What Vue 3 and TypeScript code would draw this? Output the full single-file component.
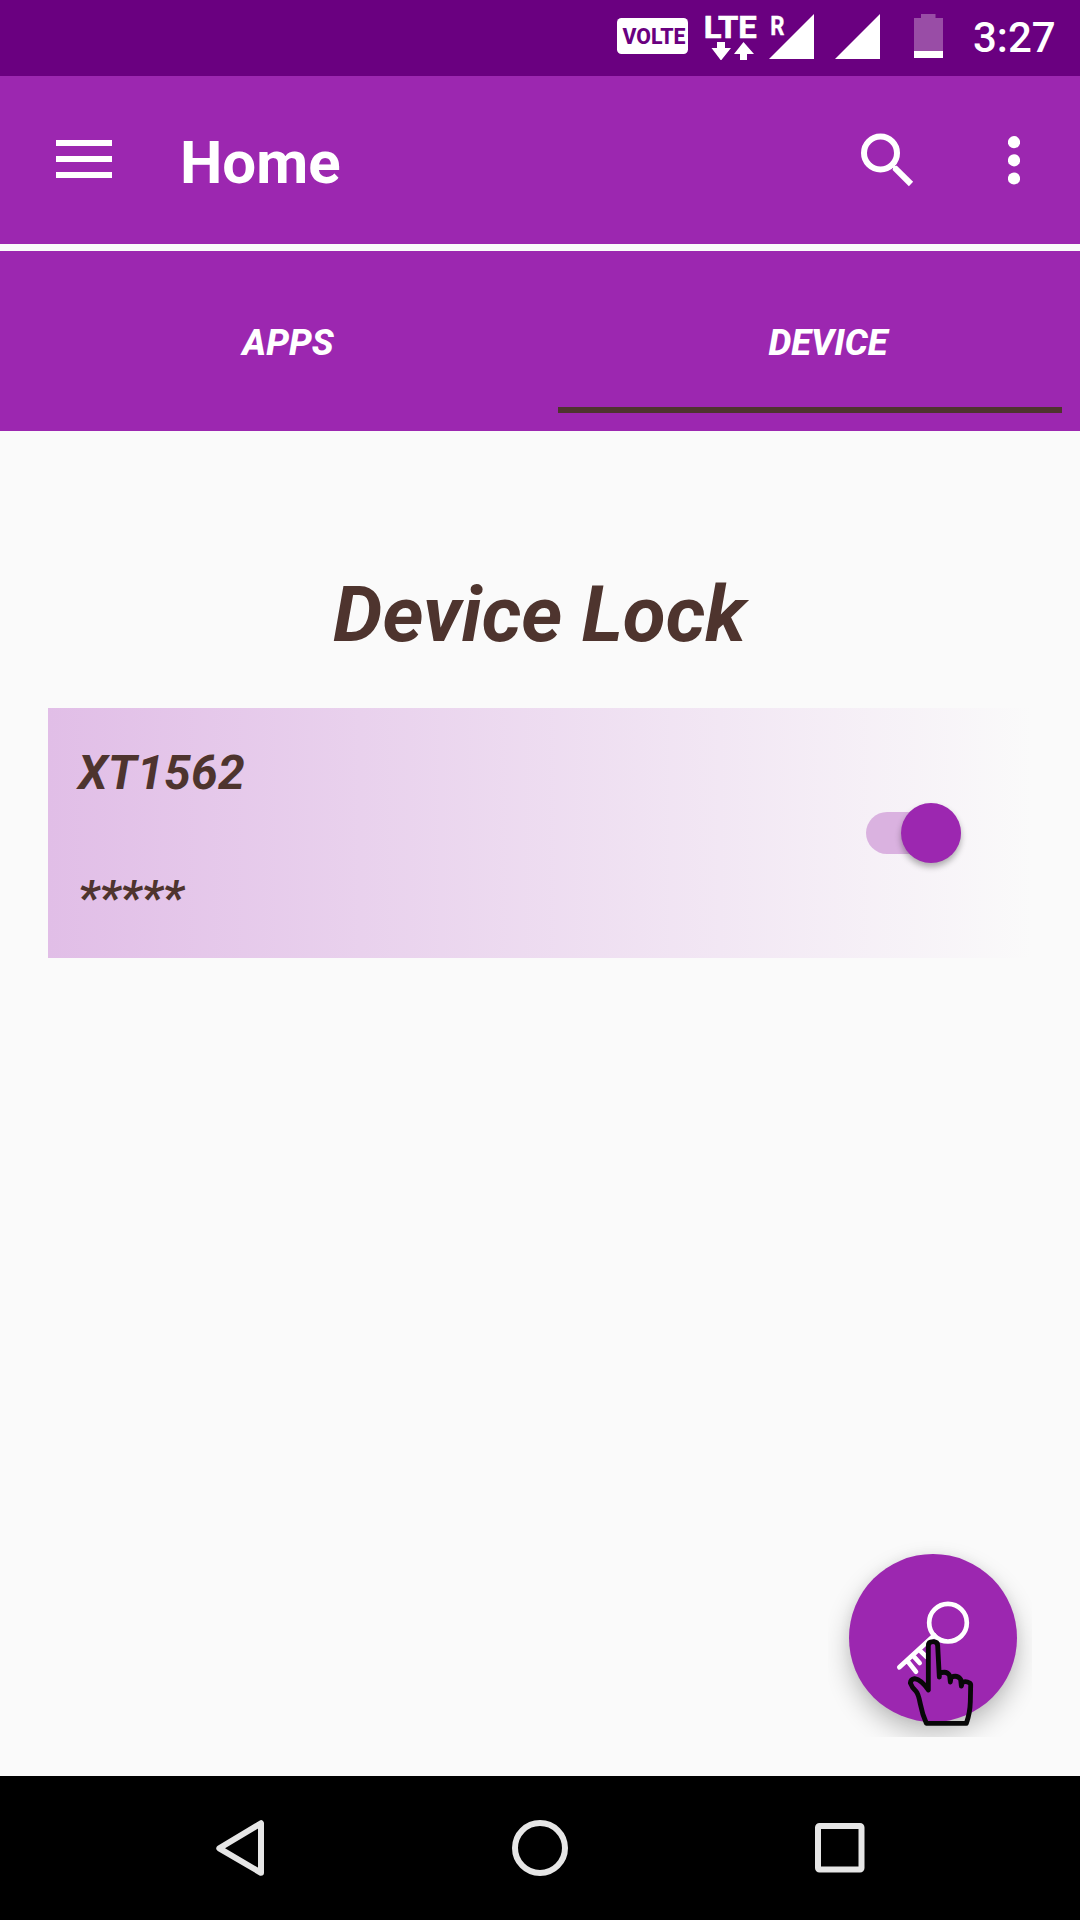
<script setup lang="ts">
import { ref } from 'vue'

interface Tab {
  id: string
  label: string
}

const tabs: Tab[] = [
  { id: 'apps', label: 'APPS' },
  { id: 'device', label: 'DEVICE' },
]
const active = ref('device')
const locked = ref(true)
const device = { name: 'XT1562', pin: '*****' }
</script>

<template>
  <div class="screen">
    <div class="status">
      <svg class="volte" width="71" height="36" viewBox="0 0 71 36">
        <rect width="71" height="36" rx="4.5" fill="#fff" />
        <text x="5.4" y="25.6" font-size="21.5" font-weight="800" fill="#6a0080" textLength="63" lengthAdjust="spacingAndGlyphs">VOLTE</text>
      </svg>
      <svg class="lte" width="53" height="76" viewBox="704 0 53 76" fill="#fff">
        <text x="703.800" y="37.500" font-size="31.500" font-weight="700" stroke="#fff" stroke-width=".6" textLength="52.800" lengthAdjust="spacingAndGlyphs">LTE</text>
        <path d="M717 42h8v6h6l-9.600 12h-.8L711.500 48h5.500zM743.500 42l10.500 12h-7v6h-7v-6h-6z" />
      </svg>
      <svg class="signal" width="46" height="76" viewBox="769 0 46 76" fill="#fff">
        <text x="770.2" y="35.3" font-size="25" font-weight="700" stroke="#fff" stroke-width=".4" textLength="14.200" lengthAdjust="spacingAndGlyphs">R</text>
        <path d="M769 59L814 14v45z" />
      </svg>
      <svg class="signal second" width="46" height="76" viewBox="835 0 46 76" fill="#fff">
        <path d="M835 59L880 14v45z" />
      </svg>
      <svg class="battery" width="29" height="76" viewBox="914 0 29 76">
        <path d="M921 14h14.500v4H943v33h-29V18h7z" fill="#994da6" />
        <path d="M914 51h29v7h-29z" fill="#fff" />
      </svg>
      <span class="clock">3:27</span>
    </div>

    <header class="toolbar">
      <svg class="menu" width="56" height="38" viewBox="0 0 56 38" fill="#fff">
        <path d="M0 0h56v6H0zM0 16h56v6H0zM0 32h56v6H0z" />
      </svg>
      <h1>Home</h1>
      <svg class="search" width="54" height="54" viewBox="0 0 54 54" fill="none" stroke="#fff">
        <circle cx="20.500" cy="20" r="16.500" stroke-width="6" />
        <path d="M34.500 34.700L51 51" stroke-width="6" />
        <path d="M34 36.800v-2.800h3" stroke-width="2" />
      </svg>
      <svg class="more" width="12" height="49" viewBox="0 0 12 49" fill="#fff">
        <circle cx="6" cy="6.200" r="6.100" />
        <circle cx="6" cy="24.300" r="6.100" />
        <circle cx="6" cy="42.500" r="6.100" />
      </svg>
    </header>

    <nav class="tabs">
      <div
        v-for="tab in tabs"
        :key="tab.id"
        class="tab"
        :class="[tab.id, { active: tab.id === active }]"
        @click="active = tab.id"
      >
        <span>{{ tab.label }}</span>
      </div>
    </nav>

    <main class="content">
      <h2>Device Lock</h2>
      <section class="card">
        <div class="info">
          <span class="name">{{ device.name }}</span>
          <span class="pin">{{ device.pin }}</span>
        </div>
        <div class="switch" :class="{ on: locked }" @click="locked = !locked">
          <div class="thumb"></div>
        </div>
      </section>
      <div class="fab-area">
        <div class="fab"></div>
        <svg width="204" height="207" viewBox="24 0 612 621" fill="none" stroke-linecap="round" stroke-linejoin="round">
          <g stroke="#fff" stroke-width="14">
            <circle cx="384" cy="278" r="56.500" />
            <path d="M343 316L238 412M263 394L288 425M281 379L299 399M299 361L320 381" />
          </g>
          <path
            d="M325 480V347Q325 335 339 335T353 347L358 441V430Q381 421 389 437L391 456L393 442Q411 433 422 448L424 468L427 457Q438 452 449 459Q453 462 452 468L451 515Q450 550 439 580H319Q307 553 301 522T288 484Q276 473 271 459Q272 448 284 446Q305 450 325 480"
            stroke="#080808"
            stroke-width="14.500"
          />
        </svg>
      </div>
    </main>

    <footer class="navbar">
      <svg width="48" height="56" viewBox="216 1820 48 56">
        <path d="M219.300 1848.300L261 1823.200V1872.800Z" />
      </svg>
      <svg width="56" height="56" viewBox="0 0 56 56">
        <circle cx="28" cy="28" r="25" />
      </svg>
      <svg width="50" height="50" viewBox="0 0 50 50">
        <rect x="3" y="3" width="43.500" height="43.500" rx="1.500" />
      </svg>
    </footer>
  </div>
</template>

<style>
body {
  margin: 0;
}
</style>

<style scoped>
.screen {
  width: 1080px;
  height: 1920px;
  display: flex;
  flex-direction: column;
  overflow: hidden;
  background: #fafafa;
  font-family: Roboto, 'Liberation Sans', sans-serif;
}
svg {
  display: block;
  flex: none;
}
.status {
  height: 76px;
  flex: none;
  display: flex;
  align-items: center;
  background: #6a0080;
  padding-left: 617px;
}
.volte {
  margin-bottom: 4px;
}
.lte {
  margin-left: 16px;
}
.signal {
  margin-left: 12px;
}
.signal.second {
  margin-left: 20px;
}
.battery {
  margin-left: 33px;
}
.clock {
  margin-left: 30px;
  font-size: 42px;
  font-weight: 500;
  line-height: 76px;
  color: #fff;
}
.toolbar {
  height: 168px;
  flex: none;
  display: flex;
  align-items: center;
  background: #9c27b0;
  padding: 0 60px 0 56px;
  box-sizing: border-box;
}
.menu {
  margin-top: -2px;
}
h1 {
  margin: 6px auto 0 68px;
  font-size: 60px;
  line-height: 70px;
  font-weight: 700;
  color: #fff;
}
.search {
  margin-right: 94px;
}
.tabs {
  height: 180px;
  flex: none;
  margin-top: 7px;
  display: flex;
  justify-content: space-between;
  background: #9c27b0;
  box-sizing: border-box;
  padding: 0 18px 18px 36px;
}
.tab {
  width: 504px;
  flex: none;
  display: flex;
  flex-direction: column;
  align-items: center;
  justify-content: center;
  box-sizing: border-box;
  border-bottom: 6px solid transparent;
  color: #fff;
  font-size: 36.300px;
  font-style: italic;
  font-weight: 800;
}
.tab.active {
  border-color: #4e342e;
}
.tab.device {
  padding-left: 36px;
}
.tab span {
  margin-top: 27px;
}
.content {
  flex: 1;
  position: relative;
  padding: 138px 48px 0;
}
h2 {
  margin: 0;
  padding-right: 1px;
  text-align: center;
  font-size: 78.400px;
  line-height: 91px;
  font-style: italic;
  font-weight: 700;
  color: #4e342e;
}
.card {
  margin-top: 48px;
  height: 250px;
  display: flex;
  justify-content: space-between;
  align-items: center;
  box-sizing: border-box;
  padding: 0 71px 0 30px;
  background: linear-gradient(90deg, #e1bee7, #fafafa);
}
.info {
  display: flex;
  flex-direction: column;
  gap: 69px;
  margin-top: 5px;
  font-size: 48px;
  line-height: 56px;
  font-style: italic;
  font-weight: 700;
  color: #4e342e;
}
.name {
  letter-spacing: 0.3px;
}
.switch {
  width: 95px;
  height: 42px;
  border-radius: 21px;
  background: #dab2e0;
  display: flex;
  align-items: center;
}
.switch.on {
  justify-content: flex-end;
}
.thumb {
  width: 60px;
  height: 60px;
  flex: none;
  border-radius: 50%;
  background: #9c27b0;
  box-shadow: 0 4px 6px rgba(0, 0, 0, 0.3);
}
.fab-area {
  position: absolute;
  right: 48px;
  bottom: 39px;
  width: 204px;
  height: 207px;
  overflow: hidden;
}
.fab {
  width: 168px;
  height: 168px;
  margin: 23.500px 0 0 21px;
  border-radius: 50%;
  background: #9c27b0;
  box-shadow: 0 12px 26px rgba(0, 0, 0, 0.24), 0 0 12px rgba(0, 0, 0, 0.06);
}
.fab-area svg {
  position: absolute;
  left: 0;
  top: 0;
}
.navbar {
  height: 144px;
  flex: none;
  display: flex;
  align-items: center;
  justify-content: space-between;
  box-sizing: border-box;
  padding: 0 215px 0 216px;
  background: #000;
}
.navbar svg {
  fill: none;
  stroke: #e6e6e6;
  stroke-width: 6;
  stroke-linejoin: round;
}
</style>
